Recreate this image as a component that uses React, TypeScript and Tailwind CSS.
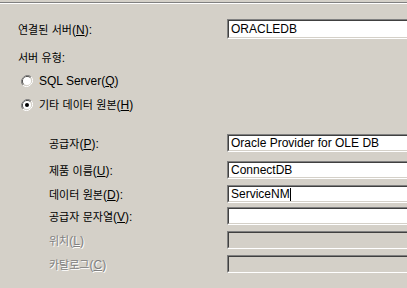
import React from 'react';

const FONT = "font-['Liberation_Sans','Noto_Sans_CJK_KR',sans-serif]";

// Hangul runs are drawn a bit smaller so their advance matches the old Gulim/Dotum metrics
function KText({ text }: { text: string }) {
  const parts = text.split(/([\uAC00-\uD7A3]+)/);
  return (
    <>
      {parts.map((p, i) =>
        /[\uAC00-\uD7A3]/.test(p) ? (
          <span key={i} className="text-[11px]">{p}</span>
        ) : (
          <span key={i}>{p}</span>
        )
      )}
    </>
  );
}

function Label({ text, mn, tail = ':', disabled = false }: { text: string; mn: string; tail?: string; disabled?: boolean }) {
  return (
    <span
      className={`text-[12px] leading-none whitespace-pre ${
        disabled ? 'text-[#808080] [text-shadow:1px_1px_0_#ffffff]' : 'text-black'
      }`}
    >
      <KText text={text} />(<u>{mn}</u>){tail}
    </span>
  );
}

function Field({ value, h, disabled = false, caret = false }: { value?: string; h: string; disabled?: boolean; caret?: boolean }) {
  return (
    <div className={`w-[200px] shrink-0 ${h} border border-t-[#808080] border-l-[#808080] border-b-white border-r-white`}>
      <div
        className={`h-full border border-t-[#404040] border-l-[#404040] border-b-[#d4d0c8] border-r-[#d4d0c8] ${
          disabled ? 'bg-[#d4d0c8]' : 'bg-white'
        } flex items-center pl-[2px] text-[12px] leading-none text-black`}
      >
        {value}
        {caret && <span className="inline-block w-px h-[13px] bg-black" />}
      </div>
    </div>
  );
}

function Radio({ checked }: { checked?: boolean }) {
  return (
    <svg width="12" height="12" viewBox="0 0 12 12" className="shrink-0">
      <path d="M10.2 1.8 A6 6 0 0 0 1.8 10.2" fill="none" stroke="#808080" strokeWidth="1" />
      <path d="M1.8 10.2 A6 6 0 0 0 10.2 1.8" fill="none" stroke="#ffffff" strokeWidth="1" />
      <path d="M9.5 2.5 A5 5 0 0 0 2.5 9.5" fill="none" stroke="#404040" strokeWidth="1" />
      <path d="M2.5 9.5 A5 5 0 0 0 9.5 2.5" fill="none" stroke="#d4d0c8" strokeWidth="1" />
      <circle cx="6" cy="6" r="4" fill="#ffffff" />
      {checked && <circle cx="6" cy="6" r="2" fill="#000000" />}
    </svg>
  );
}

const rows = [
  { text: '공급자', mn: 'P', value: 'Oracle Provider for OLE DB', mt: 'mt-[21px]' },
  { text: '제품 이름', mn: 'U', value: 'ConnectDB', mt: 'mt-[9px]' },
  { text: '데이터 원본', mn: 'D', value: 'ServiceNM', mt: 'mt-[6px]', caret: true },
  { text: '공급자 문자열', mn: 'V', value: '', mt: 'mt-[4px]' },
  { text: '위치', mn: 'L', value: '', mt: 'mt-[6px]', disabled: true, tail: '' },
  { text: '카탈로그', mn: 'C', value: '', mt: 'mt-[6px]', disabled: true, tail: '' },
];

export default function App() {
  return (
    <div className={`w-[407px] h-[288px] bg-[#d4d0c8] overflow-hidden ${FONT}`}>
      {/* etched separator */}
      <div className="h-[2px]" />
      <div className="border-t border-[#808080]" />
      <div className="border-t border-white" />

      {/* linked server */}
      <div className="mt-[15px] flex items-center h-[20px]">
        <div className="w-[227px] shrink-0 pl-[18px]">
          <Label text="연결된 서버" mn="N" />
        </div>
        <Field value="ORACLEDB" h="h-[20px]" />
      </div>

      {/* server type */}
      <div className="mt-[11px] h-[16px] flex items-center pl-[18px]">
        <span className="text-[12px] leading-none whitespace-pre">
          <KText text="서버 유형" />:
        </span>
      </div>

      <div className="mt-[7px] h-[16px] flex items-center gap-[6px] pl-[21px]">
        <Radio />
        <span className="text-[12px] leading-none">
          SQL Server(<u>Q</u>)
        </span>
      </div>
      <div className="mt-[8px] h-[16px] flex items-center gap-[6px] pl-[21px]">
        <Radio checked />
        <Label text="기타 데이터 원본" mn="H" tail="" />
      </div>

      {/* provider fields */}
      {rows.map((r) => (
        <div key={r.mn} className={`${r.mt} flex items-center h-[18px]`}>
          <div className="w-[227px] shrink-0 pl-[49px]">
            <Label text={r.text} mn={r.mn} tail={r.tail ?? ':'} disabled={r.disabled} />
          </div>
          <Field value={r.value} h="h-[18px]" disabled={r.disabled} caret={r.caret} />
        </div>
      ))}
    </div>
  );
}
